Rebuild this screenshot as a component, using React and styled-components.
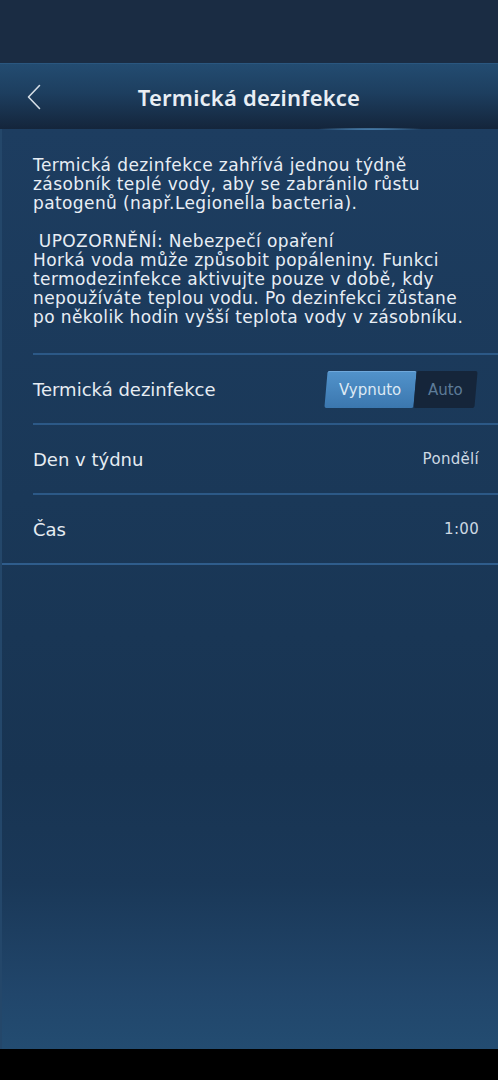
import React from "react";
import styled, { createGlobalStyle } from "styled-components";

const GlobalStyle = createGlobalStyle`
  html, body { margin: 0; padding: 0; background: #000; }
  * { box-sizing: border-box; }
`;

const Screen = styled.div`
  width: 498px;
  height: 1080px;
  display: flex;
  flex-direction: column;
  background: #000;
  font-family: "DejaVu Sans", "Noto Sans", sans-serif;
  overflow: hidden;
`;

const StatusArea = styled.div`
  height: 63px;
  flex-shrink: 0;
  background: #1a2c43;
`;

const Header = styled.header`
  position: relative;
  height: 66px;
  flex-shrink: 0;
  display: grid;
  grid-template-columns: 60px 1fr 60px;
  align-items: center;
  background: linear-gradient(180deg, #234c71 0%, #1d3e5f 45%, #14253b 100%);
  border-top: 1px solid #2a5780;
  &::after {
    content: "";
    position: absolute;
    left: 310px;
    width: 120px;
    bottom: -1px;
    height: 2px;
    background: radial-gradient(ellipse at center, rgba(190, 230, 255, 1) 0%, rgba(100, 170, 225, 0.6) 30%, rgba(40, 90, 140, 0) 70%);
  }
`;

const BackButton = styled.button`
  background: none;
  border: none;
  padding: 0 0 0 26px;
  height: 100%;
  display: flex;
  align-items: center;
  cursor: pointer;
`;

const Title = styled.h1`
  margin: 0;
  text-align: center;
  font-family: "Noto Sans", "DejaVu Sans", sans-serif;
  font-size: 22px;
  font-weight: 600;
  color: #e9eef4;
  letter-spacing: 0.2px;
`;

const Content = styled.main`
  flex: 1;
  display: flex;
  flex-direction: column;
  background: linear-gradient(180deg, #1d3d60 0%, #1a3858 40%, #183452 70%, #1a3858 82%, #21466b 94%, #234c71 100%);
  border-left: 2px solid #24476a;
`;

const Description = styled.p`
  margin: 0;
  padding: 27px 4px 0 31px;
  font-size: 17px;
  line-height: 19px;
  letter-spacing: 0.4px;
  color: #e8eef5;
  white-space: nowrap;
`;

const Blank = styled.span`
  display: block;
  height: 19px;
`;

const List = styled.div`
  margin-top: 26px;
  border-bottom: 2px solid #2f5d8c;
`;

const Row = styled.div`
  margin-left: 31px;
  height: 70px;
  display: flex;
  align-items: center;
  justify-content: space-between;
  padding-right: ${(p) => (p.$control ? "22px" : "19px")};
  border-top: 2px solid #2c5987;
`;

const Label = styled.span`
  font-size: 18px;
  color: #e6ecf2;
`;

const Value = styled.span`
  font-size: 15px;
  letter-spacing: 0.3px;
  color: #cdd8e3;
`;

const Segmented = styled.div`
  display: flex;
  height: 37px;
  transform: skewX(-5deg);
`;

const Segment = styled.button`
  border: none;
  padding: 0;
  width: ${(p) => (p.$active ? "89px" : "61px")};
  height: 100%;
  border-radius: 2px;
  background: ${(p) =>
    p.$active ? "linear-gradient(180deg, #5293cb 0%, #3b77af 100%)" : "#15253a"};
  box-shadow: ${(p) => (p.$active ? "inset 0 1px 0 rgba(140,190,235,0.5)" : "none")};
  font-family: inherit;
  font-size: 15px;
  color: ${(p) => (p.$active ? "#dde9f4" : "#5d7b98")};
  display: flex;
  align-items: center;
  justify-content: center;
  cursor: pointer;
  & > span { transform: skewX(5deg); }
`;

const ChevronLeft = () => (
  <svg width="16" height="26" viewBox="0 0 16 26" fill="none">
    <path d="M13.5 1.5 L2.5 13 L13.5 24.5" stroke="#d6dee6" strokeWidth="1.6" strokeLinecap="round" strokeLinejoin="round" />
  </svg>
);

export default function App() {
  return (
    <>
      <GlobalStyle />
      <Screen>
        <StatusArea />
        <Header>
          <BackButton aria-label="Zpět">
            <ChevronLeft />
          </BackButton>
          <Title>Termická dezinfekce</Title>
          <div />
        </Header>
        <Content>
          <Description>
            Termická dezinfekce zahřívá jednou týdně
            <br />
            zásobník teplé vody, aby se zabránilo růstu
            <br />
            patogenů (např.Legionella bacteria).
            <Blank />
            {"\u00a0"}UPOZORNĚNÍ: Nebezpečí opaření
            <br />
            Horká voda může způsobit popáleniny. Funkci
            <br />
            termodezinfekce aktivujte pouze v době, kdy
            <br />
            nepoužíváte teplou vodu. Po dezinfekci zůstane
            <br />
            po několik hodin vyšší teplota vody v zásobníku.
          </Description>
          <List>
            <Row $control>
              <Label>Termická dezinfekce</Label>
              <Segmented>
                <Segment $active><span>Vypnuto</span></Segment>
                <Segment><span>Auto</span></Segment>
              </Segmented>
            </Row>
            <Row>
              <Label>Den v týdnu</Label>
              <Value>Pondělí</Value>
            </Row>
            <Row>
              <Label>Čas</Label>
              <Value>1:00</Value>
            </Row>
          </List>
        </Content>
        <div style={{ height: 31, flexShrink: 0, background: "#000" }} />
      </Screen>
    </>
  );
}
